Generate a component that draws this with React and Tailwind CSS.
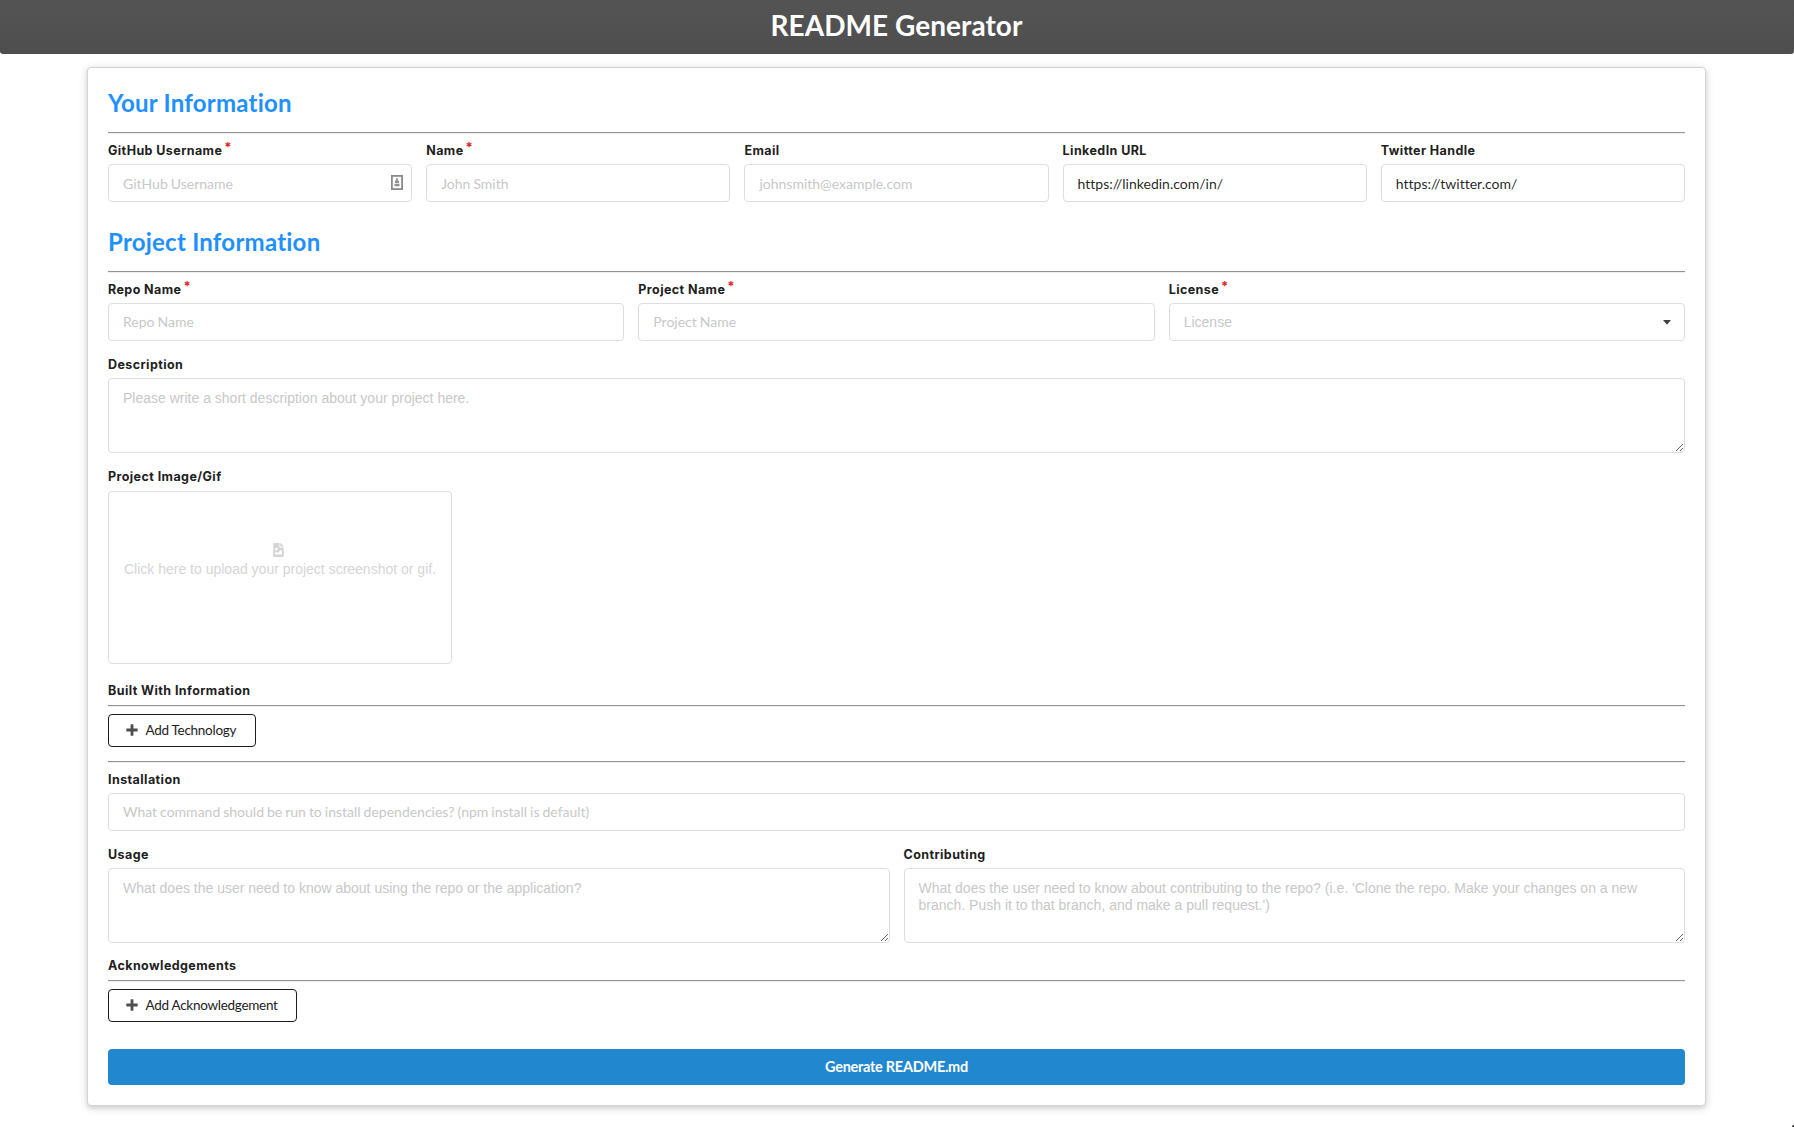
import React from "react";

const Label = ({ children, required, className = "" }) => (
  <label className={"flex h-[18px] items-center whitespace-pre pb-px font-['Inter'] text-[12.5px] font-[650] leading-[17px] tracking-[0.42px] text-[#212121] " + className}>
    {children}
    {required && <span className="-mt-[6px] ml-[2px] text-[13px] font-bold text-[#db2828]">*</span>}
  </label>
);

const control =
  "block w-full rounded-[4px] border border-[#dededf] bg-white px-[14px] text-[14px] text-black/87 outline-none placeholder:text-[#c8c8c8] placeholder:opacity-100 ";

const Field = ({ label, required, className = "", children, ...props }) => (
  <div className={"min-w-0 flex-1 " + className}>
    <Label required={required}>{label}</Label>
    <div className="relative mt-1">
      <input className={control + "h-[38px] pb-px font-['Lato'] [word-spacing:-0.6px] [font-variant-ligatures:none]"} {...props} />
      {children}
    </div>
  </div>
);

const Area = ({ label, placeholder }) => (
  <div className="min-w-0 flex-1">
    <Label>{label}</Label>
    <textarea
      placeholder={placeholder}
      className={control + "mt-1 h-[75px] resize-y py-[11px] font-['Liberation_Sans'] leading-[17px]"}
    />
  </div>
);

const Rule = ({ className = "" }) => (
  <hr className={"h-[2px] border-0 border-t border-[#939393] bg-[#efefef] " + className} />
);

const Heading = ({ children, className = "" }) => (
  <h2 className={"font-['Lato'] text-[24px] font-bold leading-[29px] tracking-[0.23px] text-[#1e90ff] [font-variant-ligatures:none] " + className}>{children}</h2>
);

const AddButton = ({ children, className }) => (
  <button
    className={
      "mt-[7px] flex h-[33px] items-center whitespace-nowrap rounded-[4px] border border-[#1b1c1d] bg-white pb-px pl-[17px] font-['Lato'] text-[13.5px] leading-none tracking-[-0.28px] text-[#222] " +
      className
    }
  >
    <svg width="12" height="12" viewBox="0 0 12 12" className="mr-[7.5px] shrink-0">
      <path d="M5 0.3h2q.4 0 .4.4v3.900h3.900q.4 0 .4.4v2q0 .4-.4.4H7.4v3.900q0 .4-.4.4H5q-.4 0-.4-.4V7.4H.7Q.3 7.4.3 7V5q0-.4.4-.4h3.900V.7q0-.4.4-.4z" fill="#4e4e4e" />
    </svg>
    <span className="pt-[2px]">{children}</span>
  </button>
);

export default function App() {
  return (
    <div className="relative h-[1127px] w-full overflow-hidden bg-white">
      <header className="flex h-[54px] items-center justify-center rounded-b-[3px] bg-linear-to-b from-[#545454] to-[#4e4e4e] pr-px">
        <h1 className="-mt-[3px] font-['Lato'] text-[28px] font-bold leading-[35px] tracking-[0.05px] text-white">README Generator</h1>
      </header>
      <main className="ml-[87px] mt-[13px] h-[1039px] w-[1619px] rounded-[4px] border border-[#d4d4d5] bg-white p-5 shadow-[0_2px_4px_0_rgba(34,36,38,0.12),0_2px_10px_0_rgba(34,36,38,0.15)]">
        <Heading className="mb-[15px]">Your Information</Heading>
        <Rule />
        <section className="mt-2 flex gap-[14px] [&_input]:pt-px">
          <Field label="GitHub Username" required placeholder="GitHub Username">
            <svg width="12" height="15" viewBox="0 0 12 15" className="absolute right-[9px] top-[11px]">
              <rect x="0.9" y="0.9" width="10.2" height="13.2" fill="#fff" stroke="#8a8a8a" strokeWidth="1.8" />
              <path d="M5.2 3h1.6v2l1.200 1v2H4V6l1.200-1zM3.500 8.700h5v2.600h-5z" fill="#929292" />
            </svg>
          </Field>
          <Field label="Name" required placeholder="John Smith" />
          <Field label="Email" placeholder="johnsmith@example.com" />
          <Field label="LinkedIn URL" defaultValue="https://linkedin.com/in/" />
          <Field label="Twitter Handle" defaultValue="https://twitter.com/" />
        </section>

        <Heading className="mb-[15px] mt-[25px]">Project Information</Heading>
        <Rule />
        <section className="mt-2 flex gap-[14px]">
          <Field label="Repo Name" required placeholder="Repo Name" />
          <Field label="Project Name" required placeholder="Project Name" />
          <div className="min-w-0 flex-1">
            <Label required>License</Label>
            <div className={control + "mt-1 flex h-[38px] items-center justify-between font-['Liberation_Sans']"}>
              <span className="text-[#c8c8c8]">License</span>
              <svg width="8" height="5" viewBox="0 0 8 5" className="-mr-[1px]">
                <path d="M0.6 0h6.800q.6.1.2.6L4.400 4.200q-.4.4-.8 0L.4.6Q0 .1.6 0z" fill="#404040" />
              </svg>
            </div>
          </div>
        </section>
        <section className="mt-[15px] flex">
          <Area label="Description" placeholder="Please write a short description about your project here." />
        </section>
        <section className="mt-[15px]">
          <Label>Project Image/Gif</Label>
          <div className="mt-[5px] flex h-[173px] w-[344px] flex-col items-center rounded-[4px] border border-[#dededf] pt-[51px] font-['Liberation_Sans'] text-[14px] text-[#d5d5d5]">
            <svg width="11" height="14" viewBox="0 0 384 512" className="mr-[3px]" fill="#d5d5d5">
              <path d="M384 121.900V128H256V0h6.100c6.400 0 12.500 2.500 17 7l97.900 98c4.500 4.500 7 10.600 7 16.900zM248 160c-13.200 0-24-10.800-24-24V0H24C10.700 0 0 10.700 0 24v464c0 13.300 10.700 24 24 24h336c13.300 0 24-10.700 24-24V160H248zM112.500 176c26.500 0 48 21.500 48 48s-21.500 48-48 48-48-21.500-48-48 21.500-48 48-48zM320.500 416h-256l.5-48.500L104.500 328c4.700-4.700 11.800-4.200 16.500.5L160.500 368 264 264.500c4.700-4.700 12.300-4.700 17 0l39.500 39.500V416z" />
            </svg>
            <span className="mt-[4px] whitespace-nowrap leading-[17px]">Click here to upload your project screenshot or gif.</span>
          </div>
        </section>

        <Label className="mt-[18px]">Built With Information</Label>
        <Rule className="mt-[5px]" />
        <AddButton className="w-[148px]">Add Technology</AddButton>
        <Rule className="mt-[14px]" />
        <section className="mt-2 flex">
          <Field label="Installation" placeholder="What command should be run to install dependencies? (npm install is default)" />
        </section>
        <section className="mt-[15px] flex gap-[14px]">
          <Area label="Usage" placeholder="What does the user need to know about using the repo or the application?" />
          <Area
            label="Contributing"
            placeholder="What does the user need to know about contributing to the repo? (i.e. 'Clone the repo. Make your changes on a new branch. Push it to that branch, and make a pull request.')"
          />
        </section>
        <Label className="mt-[14px]">Acknowledgements</Label>
        <Rule className="mt-[5px]" />
        <AddButton className="w-[189px]">Add Acknowledgement</AddButton>
        <button className="mt-[27px] block h-9 w-full rounded-[4px] bg-[#2187cf] pt-px font-['Lato'] text-[14.5px] font-bold leading-none tracking-[-0.28px] text-white">
          Generate README.md
        </button>
      </main>
      <div className="absolute bottom-0 right-0 h-[2px] w-[2px] rounded-tl-[2px] bg-[#222]" />
    </div>
  );
}
